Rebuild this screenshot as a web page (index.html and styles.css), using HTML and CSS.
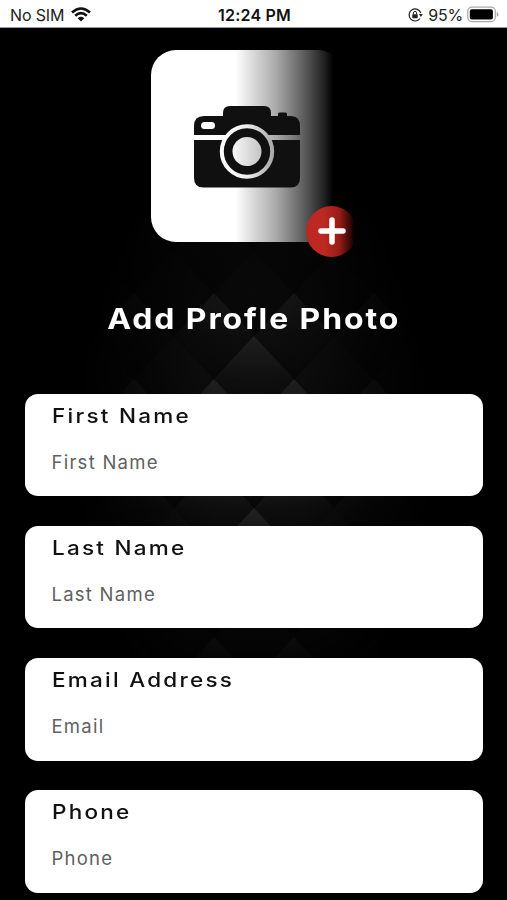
FILE: index.html
```html
<!DOCTYPE html>
<html lang="en">
<head>
<meta charset="utf-8">
<title>Add Profile Photo</title>
<link rel="stylesheet" href="styles.css">
</head>
<body>
<header class="status">
  <div class="carrier"><span class="nosim">No SIM</span>
    <svg class="wifi" width="20" height="15" viewBox="0 0 20 15"><g fill="none" stroke="#111" stroke-width="2.6"><path d="M1 5.4Q10-2.4 19 5.4"/><path d="M4.2 8.7Q10 3.6 15.8 8.7"/></g><path d="M6.700 11.200Q10 8.500 13.300 11.200L10 14.600Z" fill="#111"/></svg>
  </div>
  <div class="clock">12:24 PM</div>
  <div class="power">
    <svg width="15" height="14" viewBox="0 0 15 14"><path d="M12.800 5A6 6 0 1 0 12 10.500" fill="none" stroke="#222" stroke-width="1.2"/><path d="M10.900 6h4l-2 3z" fill="#222"/><rect x="4.300" y="6.200" width="5.400" height="4" rx=".6" fill="#222"/><path d="M5.400 6.500V5a1.600 1.600 0 0 1 3.200 0v1.500" fill="none" stroke="#222"/></svg>
    <span class="percent">95%</span>
    <svg width="32" height="17" viewBox="0 0 33 17"><rect x=".8" y="1" width="28.4" height="14.8" rx="4.2" fill="#fff" stroke="#aaa" stroke-width="1.3"/><rect x="2.9" y="3.2" width="23.8" height="10.4" rx="2" fill="#000"/><path d="M30.600 6q1.900.6 1.900 2.400t-1.900 2.400z" fill="#aaa"/></svg>
  </div>
</header>
<main class="screen">
  <svg class="backdrop" width="507" height="872" viewBox="0 28 507 872">
    <defs>
      <linearGradient id="facet" x1="0" y1="0" x2="0" y2="1"><stop offset="0" stop-color="#2a2a2a"/><stop offset=".5" stop-color="#121212"/><stop offset="1" stop-color="#090909"/></linearGradient>
      <linearGradient id="facetDim" x1="0" y1="0" x2="0" y2="1"><stop offset="0" stop-color="#151515"/><stop offset=".5" stop-color="#101010"/><stop offset="1" stop-color="#090909"/></linearGradient>
      <pattern id="quilt" x="214" y="-8" width="80" height="86" patternUnits="userSpaceOnUse">
        <path d="M40 0L80 43L40 86L0 43Z" fill="url(#facetDim)"/>
        <g fill="url(#facet)"><path d="M0 43L40 86L0 129L-40 86Z"/><path d="M80 43L120 86L80 129L40 86Z"/><path d="M0-43L40 0L0 43L-40 0Z"/><path d="M80-43L120 0L80 43L40 0Z"/></g>
      </pattern>
      <radialGradient id="glow" gradientUnits="userSpaceOnUse" cx="0" cy="0" r="1" gradientTransform="translate(254 440) scale(180 300)"><stop offset="0" stop-color="#eee"/><stop offset=".35" stop-color="#b8b8b8"/><stop offset=".65" stop-color="#505050"/><stop offset="1" stop-color="#000"/></radialGradient>
      <mask id="fade" maskUnits="userSpaceOnUse" x="0" y="28" width="507" height="872"><path d="M0 28h507v872H0z" fill="url(#glow)"/></mask>
    </defs>
    <g mask="url(#fade)">
      <path d="M0 28h507v872H0z" fill="url(#quilt)"/>
      <path d="M254 336L294 379L254 422L214 379Z" fill="url(#facet)"/>
      <path d="M254 508L294 551L254 594L214 551Z" fill="url(#facet)"/>
    </g>
  </svg>
  <section class="photo">
    <svg class="camera" width="107" height="82" viewBox="0 0 107 82">
      <defs>
        <linearGradient id="lens"><stop offset="0" stop-color="#f8f8f8"/><stop offset="1" stop-color="#c4c4c4"/></linearGradient>
        <linearGradient id="ring"><stop offset="0" stop-color="#fff"/><stop offset=".5" stop-color="#eee"/><stop offset="1" stop-color="#aaa"/></linearGradient>
      </defs>
      <path fill="#101010" d="M0 29V20q0-10 10-10H29V7q0-7 7-7H70q7 0 7 7v3h7V8q0-1.500 1.500-1.500h6q1.500 0 1.500 1.500v2h4q9 0 9 10v9ZM0 34H106V72q0 9.500-9.500 9.500H9.500Q0 81.500 0 72Z"/>
      <circle cx="53" cy="45.500" r="25.200" fill="#101010" stroke="url(#ring)" stroke-width="4"/>
      <circle cx="53" cy="45.500" r="14.500" fill="url(#lens)"/>
      <rect x="7" y="16" width="14" height="7" rx="3.500" fill="#fff"/>
    </svg>
    <div class="add"><svg width="28" height="28" viewBox="0 0 28 28"><path d="M14 3V25M3 14H25" stroke="#fff" stroke-width="5.500" stroke-linecap="round"/></svg></div>
  </section>
  <h1 class="title"><span>Add Profle Photo</span></h1>
  <form class="fields">
    <label class="field"><span class="name">First Name</span><span class="hint">First Name</span></label>
    <label class="field"><span class="name">Last Name</span><span class="hint">Last Name</span></label>
    <label class="field"><span class="name">Email Address</span><span class="hint">Email</span></label>
    <label class="field"><span class="name">Phone</span><span class="hint">Phone</span></label>
  </form>
</main>
</body>
</html>
```
FILE: styles.css
```css
* { box-sizing: border-box; }
body { margin: 0; width: 507px; height: 900px; overflow: hidden; background: #000; font-family: Inter, "Liberation Sans", sans-serif; }
.status { height: 28px; background: #fff; border-bottom: 1px solid #999; display: grid; grid-template-columns: 1fr auto 1fr; align-items: center; padding: 2px 8px 0 10px; color: #222; font-size: 16px; line-height: 24px; }
.carrier { display: flex; align-items: center; gap: 7px; }
.nosim { letter-spacing: -.15px; }
.clock { font-weight: 600; color: #111; letter-spacing: .2px; }
.power { display: flex; align-items: center; justify-content: flex-end; gap: 5px; }
.percent { letter-spacing: -.2px; margin-right: -1px; }
.screen { position: relative; height: 872px; display: flex; flex-direction: column; align-items: center; }
.backdrop { position: absolute; inset: 0; }
.photo { position: relative; width: 192px; height: 192px; margin: 22.400px 0 0 -13px; border-radius: 25px; background: linear-gradient(90deg, #fff 44%, #dedede 52%, #aaa 65%, #666 78%, #222 90%, #000 95%); display: flex; align-items: center; justify-content: center; }
.camera { display: block; margin-top: 1px; }
.add { position: absolute; left: 155px; top: 155.500px; width: 51px; height: 51px; border-radius: 50%; background: linear-gradient(90deg, #bd2822 35%, #981d18 65%, #300705 88%, #000 95%); display: flex; align-items: center; justify-content: center; }
.title { position: relative; margin: 57px 0 0; height: 40px; line-height: 40px; font-size: 28.500px; font-weight: 650; color: #fff; letter-spacing: 1.700px; white-space: nowrap; }
.title span { display: inline-block; transform: scaleX(1.12); }
.fields { position: relative; width: 458px; margin-top: 54.300px; display: flex; flex-direction: column; gap: 29.700px; }
.field { display: flex; flex-direction: column; align-items: flex-start; height: 102.500px; padding: 9px 27px 0; background: #fff; border-radius: 13px; }
.name { font-size: 20px; line-height: 26px; font-weight: 470; color: #111; letter-spacing: 2px; transform: scaleX(1.125); transform-origin: 0 50%; }
.hint { margin-top: 21px; font-size: 18.500px; line-height: 24px; color: #606060; letter-spacing: 1.250px; }
```
